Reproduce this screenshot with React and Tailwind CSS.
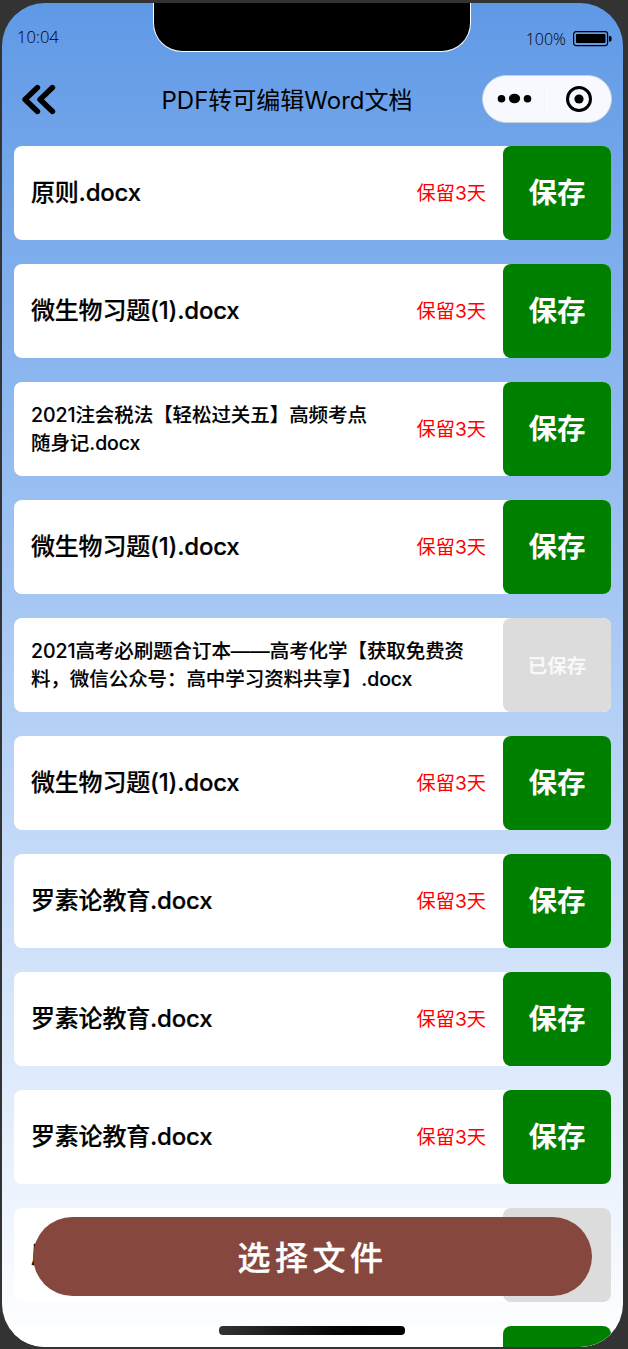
const files = [
  { lines: ['原则.docx'] },
  { lines: ['微生物习题(1).docx'] },
  { lines: ['2021注会税法【轻松过关五】高频考点', '随身记.docx'] },
  { lines: ['微生物习题(1).docx'] },
  { lines: ['2021高考必刷题合订本——高考化学【获取免费资', '料，微信公众号：高中学习资料共享】.docx'], saved: true },
  { lines: ['微生物习题(1).docx'] },
  { lines: ['罗素论教育.docx'] },
  { lines: ['罗素论教育.docx'] },
  { lines: ['罗素论教育.docx'] },
  { lines: ['原则.docx'], saved: true },
]

function FileRow({ lines, saved }) {
  const long = lines.length > 1
  return (
    <div className="flex h-[94px] shrink-0 items-center rounded-lg bg-white pl-[17px]">
      <div
        className={
          long
            ? 'flex-1 text-[19.5px] leading-7 font-medium tracking-[-0.07px] whitespace-nowrap [-webkit-text-stroke:0.12px_black]'
            : 'flex-1 text-2xl font-medium tracking-[-0.2px] whitespace-nowrap [-webkit-text-stroke:0.2px_black]'
        }
      >
        {lines.map((line) => (
          <div key={line}>{line}</div>
        ))}
      </div>
      {!saved && (
        <span className="mr-[17px] text-[19.2px] whitespace-nowrap text-[#ff0000]">保留3天</span>
      )}
      {saved ? (
        <button className="h-full w-[108px] shrink-0 rounded-lg bg-[#dcdcdc] pt-[3px] text-[19.5px] font-bold text-[#f8f8f8]">
          已保存
        </button>
      ) : (
        <button className="h-full w-[108px] shrink-0 rounded-lg bg-[#008000] pt-px text-[28.5px] font-bold text-white">
          保存
        </button>
      )}
    </div>
  )
}

function StatusBar() {
  return (
    <div className="flex h-[72px] shrink-0 items-start justify-between pt-[22px] pr-[11px] pl-[15px] font-['Open_Sans',sans-serif] text-[16.6px] leading-6 font-light">
      <span>10:04</span>
      <div className="flex items-center gap-[7px] pt-0.5">
        <span className="text-base leading-6">100%</span>
        <svg width="39" height="16" viewBox="0 0 39 16">
          <rect x="0.600" y="0.600" width="34" height="14" rx="2.500" fill="none" stroke="#000" strokeWidth="1.200" />
          <rect x="3" y="3" width="29.500" height="9" rx="1" />
          <path d="M36 5h1.200q1.500 0 1.500 2.700T37.200 10.500H36z" />
        </svg>
      </div>
    </div>
  )
}

function NavBar() {
  return (
    <div className="flex h-12 shrink-0 items-center justify-between pr-[11px] pl-5">
      <svg width="34" height="32" viewBox="0 0 34 32" fill="none" stroke="#000" strokeWidth="5.400" strokeLinecap="round" strokeLinejoin="round">
        <path d="M15.500 4.500L3 16.500l12.500 12M30.500 4.500L18 16.500l12.500 12" />
      </svg>
      <h1 className="ml-[36px] w-[322px] pt-1 text-center text-2xl whitespace-nowrap">PDF转可编辑Word文档</h1>
      <div className="flex h-12 w-[130px] items-center rounded-full border border-[#c9d0da] bg-[#f7f9fe]">
        <svg width="128" height="46" viewBox="0 0 128 46">
          <circle cx="18.500" cy="22.800" r="3.800" />
          <ellipse cx="31.500" cy="22.500" rx="5.600" ry="4.800" />
          <circle cx="44.500" cy="22.800" r="3.800" />
          <path d="M64 10v26" stroke="#fbfcff" strokeWidth="2" />
          <circle cx="96" cy="23" r="11.500" fill="none" stroke="#000" strokeWidth="3" />
          <circle cx="96" cy="23" r="4.600" />
        </svg>
      </div>
    </div>
  )
}

export default function App() {
  return (
    <div className="h-[1349px] w-[628px] overflow-hidden bg-[#333] pt-[3px] pl-0.5 font-[Inter,'Noto_Sans_CJK_SC',sans-serif] text-black">
      <div className="relative flex h-[1344px] w-[621px] flex-col overflow-hidden rounded-[43px] bg-linear-to-b from-[#5f99e6] to-white">
        <StatusBar />
        <NavBar />
        <div className="flex flex-col gap-6 px-3 pt-[23px]">
          {files.map((file, i) => (
            <FileRow key={i} {...file} />
          ))}
          {/* next card, only its top edge is in view */}
          <div className="flex h-[94px] shrink-0 justify-end rounded-lg bg-white">
            <div className="w-[108px] rounded-lg bg-[#008000]" />
          </div>
        </div>

        {/* notch */}
        <div className="absolute top-0 left-[151px] h-[49px] w-[318px] rounded-b-[29px] border border-t-0 border-white bg-black" />

        <button className="absolute top-[1214px] left-[31px] h-[79px] w-[559px] rounded-full bg-[#86473e] pt-[4px] text-[33px] font-medium tracking-[4.5px] text-white [-webkit-text-stroke:0.3px_white]">
          选择文件
        </button>

        {/* home indicator */}
        <div className="absolute top-[1323px] left-[217px] h-[9px] w-[186px] rounded bg-linear-to-r from-[#333] to-black" />
      </div>
    </div>
  )
}
